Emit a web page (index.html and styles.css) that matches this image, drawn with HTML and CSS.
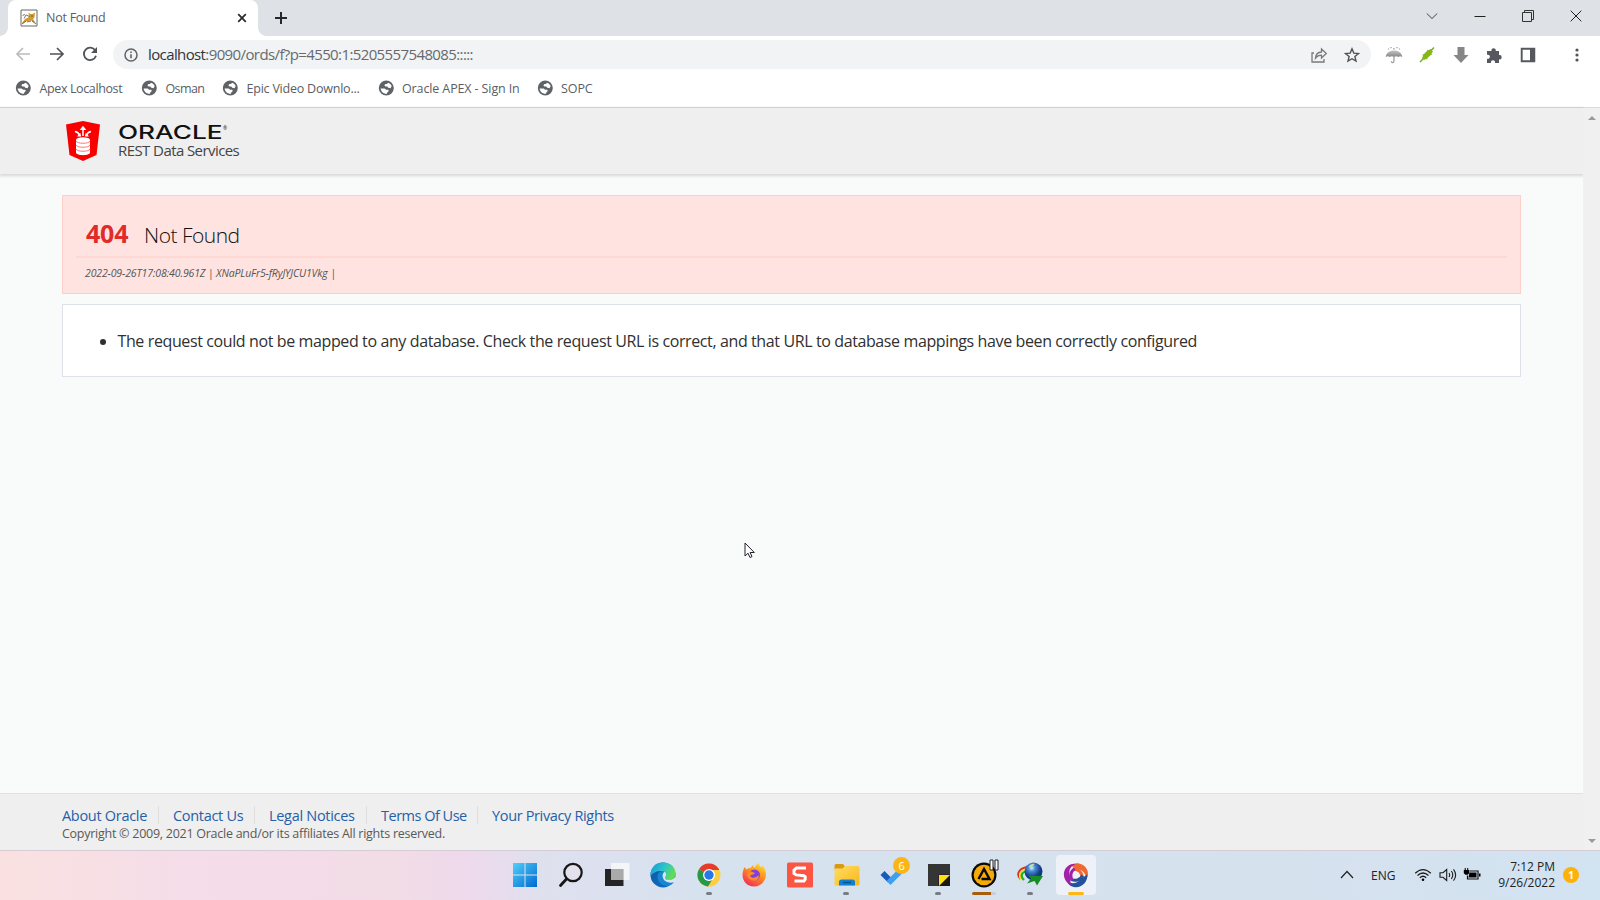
FILE: index.html
```html
<!DOCTYPE html>
<html lang="en">
<head>
<meta charset="utf-8">
<title>Not Found</title>
<link rel="stylesheet" href="styles.css">
</head>
<body>
<svg width="0" height="0" class="defs">
  <defs>
    <symbol id="globe" viewBox="0 0 16 16"><circle cx="8.300" cy="8" r="7.500" fill="#5f6368"/><path d="M10 2.800c1.800.5 3 1.600 3.700 3.300L12.500 8.300l-2.300-.5L9.300 6.500H7.500L6.300 5.300 7.500 4H9z" fill="#fff"/><path d="M2.600 8.500h4l1.600 1.200h2l.6 1.300-1.400 1.200-.4 1.500c-3.400.3-6-1.900-6.400-5.200z" fill="#fff"/></symbol>
    <linearGradient id="win" x2="1" y2="1"><stop stop-color="#4fd0fb"/><stop offset="1" stop-color="#0069cf"/></linearGradient>
    <linearGradient id="edge" x2="1" y2=".4"><stop stop-color="#1697df"/><stop offset=".6" stop-color="#2fc6c5"/><stop offset="1" stop-color="#62dc55"/></linearGradient>
    <linearGradient id="edge2" x2="1" y2="1"><stop stop-color="#0c59a4"/><stop offset="1" stop-color="#1170c8"/></linearGradient>
    <linearGradient id="fox" x1=".8" x2=".2" y2="1"><stop stop-color="#ffe32b"/><stop offset=".45" stop-color="#ff8a1d"/><stop offset="1" stop-color="#f4255e"/></linearGradient>
    <linearGradient id="folder" x2="1" y2="1"><stop stop-color="#ffdc62"/><stop offset="1" stop-color="#f9b81c"/></linearGradient>
    <linearGradient id="umb" y2="1" x2="0"><stop stop-color="#c4c4c4"/><stop offset="1" stop-color="#858585"/></linearGradient>
    <radialGradient id="ball" cx=".4" cy=".3"><stop stop-color="#d3f2ff"/><stop offset=".4" stop-color="#4989d4"/><stop offset="1" stop-color="#123b82"/></radialGradient>
  </defs>
</svg>
<div class="desktop">
  <div class="tabstrip">
    <div class="tab">
      <svg class="favicon" viewBox="0 0 18 18"><path d="M1 1h16v16H1z" fill="#fff" stroke="#666"/><path d="M2 14l3-4 4-2-.5-4.500 2 1.500h2l2.500-1.500-.5 5-1.500 1.500 3 4.500-5-3-5 1-3 2z" fill="#d49a2c"/><path d="M2 15l4-3M3 7c0-2 2.500-2 2.500 0L4 9.500M9.500 7.500L6 6M12 12l4 3M7 13l4-1M11 7h2" stroke="#56513f" stroke-width=".8" fill="none"/></svg>
      <span class="tab-title">Not Found</span>
      <svg class="tab-close" viewBox="0 0 10 10"><path d="M1.200 1.200l7.600 7.600M8.800 1.200L1.200 8.800" stroke="#25282c" stroke-width="1.700"/></svg>
    </div>
    <svg class="new-tab" viewBox="0 0 14 14"><path d="M7 1v12M1 7h12" stroke="#25282c" stroke-width="2"/></svg>
    <div class="window-controls">
      <svg viewBox="0 0 12 12"><path d="M.8 3.500L6 8.500l5.200-5" fill="none" stroke="#444"/></svg>
      <svg viewBox="0 0 12 12"><path d="M.5 6.500h11" stroke="#222"/></svg>
      <svg viewBox="0 0 12 12"><path d="M.5 2.500h9v9h-9zM2.500 2.500v-2h9v9h-2" fill="none" stroke="#333"/></svg>
      <svg viewBox="0 0 12 12"><path d="M.7 .7l10.600 10.600M11.300 .7L.7 11.300" stroke="#222"/></svg>
    </div>
  </div>

  <div class="toolbar">
    <svg class="nav" viewBox="0 0 16 16"><path d="M15 8H2M8 2L2 8l6 6" fill="none" stroke="#babcbe" stroke-width="1.700"/></svg>
    <svg class="nav" viewBox="0 0 16 16"><path d="M1 8h13M8 2l6 6-6 6" fill="none" stroke="#505357" stroke-width="1.700"/></svg>
    <svg class="nav" viewBox="0 0 16 16"><path d="M13.300 4.500A6.200 6.200 0 1 0 14 9.800" fill="none" stroke="#505357" stroke-width="1.800"/><path d="M15 1v6H9z" fill="#505357"/></svg>
    <div class="address">
      <svg class="info" viewBox="0 0 14 14"><circle cx="7" cy="7" r="6" fill="none" stroke="#5f6368" stroke-width="1.500"/><path d="M7 6.200v4M7 3.500v1.500" stroke="#5f6368" stroke-width="1.600"/></svg>
      <span class="url"><b>localhost</b>:9090/ords/f?p=4550:1:5205557548085:::::</span>
      <svg class="share" viewBox="0 0 16 16"><path d="M3 6H1v9h12v-3" fill="none" stroke="#777a7e" stroke-width="1.300"/><path d="M4.500 11c.3-4 2.500-5.800 6-6V2l4.800 4.500-4.800 4.500V8.200c-2.700 0-4.500.8-6 2.800z" fill="none" stroke="#777a7e" stroke-width="1.300"/></svg>
      <svg class="star" viewBox="0 0 16 16"><path d="M8 1.800l1.800 4.300 4.700.4-3.600 3 1.100 4.600L8 11.700l-4 2.400 1.100-4.600-3.600-3 4.700-.4z" fill="none" stroke="#505357" stroke-width="1.400"/></svg>
    </div>
    <div class="extensions">
      <svg viewBox="0 0 18 18"><path d="M.8 11C1 7 4.500 4.500 9 4.500s8 2.500 8.200 6.500c-1.500-1-2.500-1-4 0-1.500-1-2.700-1-4.200 0-1.500-1-2.700-1-4.200 0-1.500-1-2.500-1-4 0z" fill="url(#umb)"/><path d="M9 10v5c0 2-2.700 2-2.700.3M6 1v1.300M12 1v1.300M9 2v1.500M3.500 2.500v1M14.500 2.500v1" fill="none" stroke="#999" stroke-width="1.200"/></svg>
      <svg viewBox="0 0 18 18"><path d="M2 16l4-4M12 5.500l4-4" stroke="#79a82c" stroke-width="1.500"/><path d="M4.500 8.500l1.200-.2L9 5l.5-1.500 1 .8L12.500 3 15 5.500l-1.500 2 .8 1-1.500.5L9.500 12l-.3 1.500-1.200-.6-2 1-2-2 1-2z" fill="#83b818"/></svg>
      <svg viewBox="0 0 18 18"><path d="M5.500 1h7v8h4L9 17 1.500 9h4z" fill="#868686"/></svg>
      <svg viewBox="0 0 18 18"><path d="M2 5h4.500a2.200 2.200 0 1 1 4.200 0H14v4a2.200 2.200 0 1 1 0 4.300V17H10a2.100 2.100 0 1 0-4 0H2v-4.300a2.100 2.100 0 1 0 0-3.900z" fill="#55595e"/></svg>
      <svg viewBox="0 0 18 18"><path d="M2.700 2.700h12.600v12.600H2.700z" fill="none" stroke="#55595e" stroke-width="1.900"/><path d="M11 2h5v14h-5z" fill="#55595e"/></svg>
    </div>
    <svg class="menu" viewBox="0 0 4 16"><g fill="#505357"><circle cx="2" cy="3" r="1.600"/><circle cx="2" cy="8" r="1.600"/><circle cx="2" cy="13" r="1.600"/></g></svg>
  </div>

  <div class="bookmarks">
    <div class="bm bm-apex"><svg><use href="#globe"/></svg><span>Apex Localhost</span></div>
    <div class="bm bm-osman"><svg><use href="#globe"/></svg><span>Osman</span></div>
    <div class="bm bm-epic"><svg><use href="#globe"/></svg><span>Epic Video Downlo...</span></div>
    <div class="bm bm-oracle"><svg><use href="#globe"/></svg><span>Oracle APEX - Sign In</span></div>
    <div class="bm bm-sopc"><svg><use href="#globe"/></svg><span>SOPC</span></div>
  </div>

  <div class="viewport">
    <div class="page">
      <header class="site-header">
        <svg class="shield" viewBox="0 0 34 40"><path d="M0 3.500L17 0l17 3.500-3.500 30.500L17 40 3.500 34z" fill="#f80000"/><path d="M10 19v12.500c0 3.500 14 3.500 14 0V19z" fill="#fff"/><ellipse cx="17" cy="19" rx="7" ry="2.700" fill="#fff"/><path d="M10 20c1 3 13 3 14 0M10 24c1 3 13 3 14 0M10 28c1 3 13 3 14 0" fill="none" stroke="#f66" stroke-width=".9"/><path d="M17 15V8M9 10.500c2.500.5 4 2 4.500 4M25 10.500c-2.500.5-4 2-4.500 4" fill="none" stroke="#fff" stroke-width="1.500"/><path d="M17 4.800l3.300 4.200h-6.600zM11 15.500h4.200l-1-3.800zM23 15.500h-4.200l1-3.800z" fill="#fff"/></svg>
        <div class="brand">
          <div class="wordmark"><span>ORACLE</span><sup>®</sup></div>
          <div class="product">REST Data Services</div>
        </div>
      </header>
      <main>
        <section class="error">
          <h1><strong>404</strong><span>Not Found</span></h1>
          <p>2022-09-26T17:08:40.961Z | XNaPLuFr5-fRyJYJCU1Vkg |</p>
        </section>
        <section class="details"><ul><li>The request could not be mapped to any database. Check the request URL is correct, and that URL to database mappings have been correctly configured</li></ul></section>
      </main>
      <footer>
        <nav><a class="l1">About Oracle</a><a class="l2">Contact Us</a><a class="l3">Legal Notices</a><a class="l4">Terms Of Use</a><a class="l5">Your Privacy Rights</a></nav>
        <p>Copyright © 2009, 2021 Oracle and/or its affiliates All rights reserved.</p>
      </footer>
    </div>
    <div class="scrollbar">
      <svg viewBox="0 0 8 4"><path d="M0 4l4-4 4 4z" fill="#9a9a9a"/></svg>
      <svg viewBox="0 0 8 4"><path d="M0 0h8L4 4z" fill="#9a9a9a"/></svg>
    </div>
  </div>

  <div class="taskbar">
    <div class="apps">
      <div class="app"><svg viewBox="0 0 28 28"><path d="M2 2h11.500v11.500H2zM14.500 2H26v11.500H14.500zM2 14.500h11.500V26H2zM14.500 14.500H26V26H14.500z" fill="url(#win)"/></svg></div>
      <div class="app"><svg viewBox="0 0 28 28"><circle cx="16" cy="11.500" r="8.700" fill="#e4e1ec" stroke="#161616" stroke-width="2.200"/><path d="M9.500 18l-6 6.500" stroke="#161616" stroke-width="2.800" stroke-linecap="round"/></svg></div>
      <div class="app"><svg viewBox="0 0 28 28"><path d="M2 8h18.500v17H2z" fill="#242424"/><path d="M8 2h18.500v17H8z" fill="#f8f8f8" opacity=".85"/><path d="M8 8h12.500v11H8z" fill="#aaa"/></svg></div>
      <div class="app"><svg viewBox="0 0 28 28"><circle cx="14" cy="14" r="12.500" fill="url(#edge2)"/><path d="M1.600 12C3 4.500 8 1.500 14 1.500c8 0 12.500 5 12.500 11 0 4-3 6.500-7 6.500-3.500 0-4.500-1.500-3.500-3 1.500-2 .5-6-5-6-4 0-7.500 2-9.400 5z" fill="url(#edge)"/><path d="M9 13c-2 6 3 13 11 11.500 3-.6 5-3 6-5.500-5 3.500-12 1-12-5 0-1.700.7-3 1.500-3.500-3-.5-5.500.5-6.500 2.500z" fill="#1787d3"/><path d="M15.500 10.800c2 1 2 3.500.8 5.200-.9 1.400.3 3 3.200 3 3 0 5-1 6.500-3l1.500 2-1.500 2.800c-5 2.200-11.300.3-12.300-4.800-.5-2 .2-4.200 1.800-5.200z" fill="#dbe4f1"/></svg></div>
      <div class="app"><svg viewBox="0 0 28 28"><circle cx="14" cy="14" r="11.500" fill="#ffcd40"/><path d="M14 14L4 8.200A11.500 11.500 0 0 1 24 8.200L24 9H14z" fill="#e33b2e"/><path d="M14 14L4 8.200A11.500 11.500 0 0 0 13 25.500l5.500-9z" fill="#279847"/><circle cx="14" cy="14" r="6" fill="#fff"/><circle cx="14" cy="14" r="4.700" fill="#2878eb"/></svg><i class="running"></i></div>
      <div class="app"><svg viewBox="0 0 28 28"><path d="M4.500 6l2 2.500C8 7.500 9 7 10.500 7L13 4l1 3 4-5c1.500 2 2 3 2 4l3-1c3 4 4 9 2 13-2 5-6 7.500-11 7.500C7 25.500 2.500 20 2.500 14c0-3 1-6 2-8z" fill="url(#fox)"/><circle cx="14.500" cy="14" r="5.500" fill="#8141db"/><path d="M7 11c3-2 6 0 8 1-1 2-3 1-5 3 2 3 6 2 9-1 0 5-4 7-8 5-3-1.500-4.500-4.500-4-8z" fill="#ff8a27"/></svg></div>
      <div class="app"><svg viewBox="0 0 28 28"><rect x="1" y="1.500" width="26" height="25" rx="1.500" fill="#fd5544"/><path d="M20 7h-9.500L8 9.200v3.200l2.200 1.500 7.600.8 1.400 1v2.500L18 20H8.500" fill="none" stroke="#fff" stroke-width="3"/></svg></div>
      <div class="app"><svg viewBox="0 0 28 28"><path d="M2.500 4.500q0-1.500 1.500-1.500h7l2 2.500L10 9H2.500z" fill="#d89a13"/><path d="M2.500 7.500h8L13 5h13q1.500 0 1.500 1.500V23q0 1.500-1.500 1.500H4q-1.500 0-1.500-1.500z" fill="url(#folder)"/><path d="M7 24.500V21q0-2.500 2.500-2.500h11Q23 18.500 23 21v3.500z" fill="#1280d0"/><path d="M11 21.500h8" stroke="#07558f" stroke-width="1.500"/></svg><i class="running"></i></div>
      <div class="app"><svg viewBox="0 0 28 28"><path d="M2.500 14l4-4 7.500 7.500-4 4z" fill="#195abd"/><path d="M12.500 24L8.500 20 21.500 7l4 4z" fill="#3fa0ed"/></svg><b class="badge">6</b></div>
      <div class="app"><svg viewBox="0 0 28 28"><path d="M4 3h22v22H4z" fill="#353535"/><path d="M14.500 13.500H26V25H14.500z" fill="#181818"/><path d="M15 14h11L15 25z" fill="#ffde13"/></svg><i class="running"></i></div>
      <div class="app"><svg viewBox="0 0 28 28"><circle cx="14" cy="14" r="12.500" fill="#0a0a0a"/><circle cx="14" cy="14" r="10.300" fill="#f5aa08"/><path d="M8.500 18L14 8l5.500 10h-8" fill="none" stroke="#0a0a0a" stroke-width="2.400"/></svg><svg class="pause" viewBox="0 0 10 12"><path d="M1 1h3v10H1zM6 1h3v10H6z" fill="#fff" stroke="#222"/></svg><i class="running progress"></i></div>
      <div class="app"><svg viewBox="0 0 28 28"><path d="M4.500 18C-1 13 4 6 13 6" fill="none" stroke="#df3024" stroke-width="1.800"/><path d="M5.500 19C1.500 14 6 8 14 8" fill="none" stroke="#ffe21b" stroke-width="2"/><path d="M8 19c-4-4-3-8 4-9" fill="none" stroke="#22ae38" stroke-width="2.200"/><circle cx="17.500" cy="10.500" r="9" fill="url(#ball)"/><path d="M13 5c2-2 4.500-2.500 5.500-2l-2 2.500-3 1z" fill="#c8dfa0"/><path d="M12 14.500l15 .5-6 9.500-2.500-4.500-7.500 2.500 4-5z" fill="#168c24"/></svg><i class="running"></i></div>
      <div class="app active"><svg viewBox="0 0 28 28"><g transform="translate(14 14)" fill="none"><g id="blade"><path d="M-6-9.500C-1-13.500 8-12 11-5.500c1.800 4 1 8-1.500 10.500C10.500 0 8-4.500 2.500-5.500-.5-6-2.500-8.500-6-9.500z" fill="#ef6930"/></g><path d="M-6-9.500C-1-13.500 8-12 11-5.500c1.800 4 1 8-1.500 10.500C10.500 0 8-4.500 2.500-5.500-.5-6-2.500-8.500-6-9.500z" transform="rotate(120)" fill="#23519c"/><path d="M-6-9.500C-1-13.500 8-12 11-5.500c1.800 4 1 8-1.500 10.500C10.500 0 8-4.500 2.500-5.500-.5-6-2.500-8.500-6-9.500z" transform="rotate(240)" fill="#a320a8"/><path d="M-3-6C2-6 6-3 6 2" stroke="#ef6930" stroke-width="3"/><path d="M-3-6C2-6 6-3 6 2" transform="rotate(120)" stroke="#23519c" stroke-width="3"/><path d="M-3-6C2-6 6-3 6 2" transform="rotate(240)" stroke="#a320a8" stroke-width="3"/></g></svg><i class="running current"></i></div>
    </div>
    <div class="tray">
      <svg class="chevron" viewBox="0 0 14 14"><path d="M1 10l6-6.500 6 6.500" fill="none" stroke="#222" stroke-width="1.200"/></svg>
      <span class="lang">ENG</span>
      <svg class="wifi" viewBox="0 0 18 14"><g fill="none" stroke="#1b1b1b" stroke-width="1.200"><path d="M1.200 5.200q7.800-7.200 15.600 0M3.500 7.500q5.500-5 11 0M5.800 9.700q3.200-2.900 6.400 0"/></g><circle cx="9" cy="11.800" r="1.300"/></svg>
      <svg class="sound" viewBox="0 0 18 14"><g fill="none" stroke="#1b1b1b" stroke-width="1.100"><path d="M1 4.700h3L7.700 1.500v11L4 9.300H1zM10 5q1.400 2 0 4M12.300 3q3 4 0 8M14.500 1.300q4.300 5.700 0 11.400"/></g></svg>
      <svg class="battery" viewBox="0 0 18 14"><path d="M6.500 3h8.500v8H4.500V7.500" fill="none" stroke="#111" stroke-width="1.200"/><path d="M6.500 4.500h7v5h-8zM16 5.500h1.500v3H16zM.8 2h5.400v3.200L4.700 6.700H2.400L.8 5.200zM1.700 0h1v2h-1zM4.200 0h1v2h-1z"/></svg>
      <div class="clock"><span class="time">7:12 PM</span><span class="date">9/26/2022</span></div>
      <b class="notify">1</b>
    </div>
  </div>
  <svg class="cursor" viewBox="0 0 12 18"><path d="M1 1v13l3-2.800 2 4.300 2-.9-1.900-4.100h4.200z" fill="#fff" stroke="#25202a"/></svg>
</div>
</body>
</html>
```

FILE: styles.css
```css
* { box-sizing: border-box; }
body { margin: 0; font-family: "Open Sans", "Noto Sans", sans-serif; color: #222; }
svg { display: block; flex: none; }
.defs { position: absolute; }
.desktop { width: 1600px; height: 900px; display: flex; flex-direction: column; overflow: hidden; position: relative; white-space: nowrap; background: #fff; }

.tabstrip { height: 36px; flex: none; display: flex; align-items: center; background: #dee1e6; padding-left: 8px; }
.tab { position: relative; width: 250px; height: 36px; display: flex; align-items: center; background: #fff; border-radius: 8px 8px 0 0; padding: 0 11px 1px 12px; }
.tab::before, .tab::after { content: ""; position: absolute; bottom: 0; width: 8px; height: 8px; }
.tab::before { left: -8px; background: radial-gradient(circle at 0 0, #dee1e6 7.5px, #fff 8px); }
.tab::after { right: -8px; background: radial-gradient(circle at 100% 0, #dee1e6 7.5px, #fff 8px); }
.favicon { width: 18px; height: 18px; }
.tab-title { margin-left: 8px; flex: 1; font-size: 12.5px; letter-spacing: -.25px; color: #5a5e64; }
.tab-close { width: 10px; height: 10px; }
.new-tab { width: 14px; height: 14px; margin-left: 16px; }
.window-controls { margin-left: auto; display: flex; gap: 36px; padding: 0 18px 5px 0; }
.window-controls svg { width: 12px; height: 12px; }

.toolbar { height: 36px; flex: none; display: flex; align-items: center; padding: 1px 21px 0 15px; }
.nav { width: 16px; height: 16px; margin: -1px 17.500px 0 0; }
.address { width: 1258px; height: 29px; margin-left: -2.500px; border-radius: 15px; background: #f1f3f4; display: flex; align-items: center; padding: 0 11px; }
.info { width: 14px; height: 14px; }
.url { margin: -2px 0 0 10px; font-size: 15px; letter-spacing: -.61px; color: #666a6f; flex: 1; }
.url b { font-weight: 400; color: #303338; }
.share { width: 16px; height: 16px; margin-right: 17px; }
.star { width: 16px; height: 16px; }
.extensions { display: flex; gap: 15.500px; margin-left: 13.500px; }
.extensions svg { width: 18px; height: 18px; }
.menu { width: 4px; height: 16px; margin-left: auto; }

.bookmarks { height: 36px; flex: none; display: flex; align-items: center; padding: 0 0 3px 15px; border-bottom: 1px solid #dcdcdc; }
.bm { display: flex; align-items: center; gap: 8.500px; font-size: 12.500px; letter-spacing: -.22px; color: #5a5e64; }
.bm svg { width: 16px; height: 16px; }
.bm-apex { width: 126px; letter-spacing: -.38px; }
.bm-osman { width: 81px; letter-spacing: -.6px; }
.bm-epic { width: 156px; }
.bm-oracle { width: 159px; letter-spacing: -.12px; gap: 8px; }
.bm-sopc { letter-spacing: -.1px; gap: 8px; }

.viewport { height: 742px; flex: none; display: flex; }
.page { width: 1583px; display: flex; flex-direction: column; background: #f9fbfa; }
.site-header { height: 66px; flex: none; display: flex; padding: 13px 0 0 66px; background: #efefef; box-shadow: 0 1px 3px 1px rgba(0, 0, 0, .14); }
.shield { width: 34px; height: 40px; }
.brand { margin-left: 18px; padding-top: 4px; }
.wordmark { height: 16px; line-height: 16px; display: flex; color: #111; }
.wordmark span { width: 105px; height: 16px; overflow: hidden; font: 500 19px/16px Inter, sans-serif; }
.wordmark span { width: 76.500px; margin-right: 28.500px; transform: scaleX(1.380); transform-origin: 0 50%; }
.wordmark sup { font-size: 5px; line-height: 6px; }
.product { padding-top: 1px; font-size: 15px; line-height: 16px; letter-spacing: -.58px; color: #444; }
main { flex: 1; padding: 21px 62px 0; }
.error { height: 99px; padding: 24px 13px 0; border: 1px solid #fccfcb; background: #ffe3e0; }
.error h1 { margin: 0; height: 38px; padding-left: 10px; display: flex; align-items: baseline; font-weight: 400; line-height: 27px; border-bottom: 2px solid #ffd7d3; }
.error strong { width: 58px; font-size: 25px; letter-spacing: -.2px; color: #e12b28; }
.error h1 span { font-size: 21px; font-weight: 300; letter-spacing: -.5px; color: #111; }
.error p { margin: 6px 0 0 9px; font-size: 10.500px; line-height: 18px; letter-spacing: -.14px; font-style: italic; color: #555; }
.details { height: 73px; margin-top: 10px; border: 1px solid #dce2e8; background: #fff; }
.details ul { margin: 0; padding: 24px 0 0 54.500px; font-size: 16px; line-height: 24px; letter-spacing: -.385px; color: #303030; }
footer { height: 57px; padding: 12px 0 0 62px; border-top: 1px solid #dfe2e2; background: #efefef; }
nav { display: flex; height: 18px; font-size: 14.500px; line-height: 20px; letter-spacing: -.3px; color: #2460a8; }
nav a + a { padding-left: 14px; border-left: 1px solid #ddd; }
.l1 { width: 96px; } .l2 { width: 96px; } .l3 { width: 112px; } .l4 { width: 111px; letter-spacing: -.5px; } .l5 { letter-spacing: -.35px; }
footer p { margin: 0; font-size: 12.500px; line-height: 20px; letter-spacing: -.26px; color: #595959; }
.scrollbar { width: 17px; background: #f0f0f0; display: flex; flex-direction: column; justify-content: space-between; align-items: center; padding: 8px 0 7px; }
.scrollbar svg { width: 8px; height: 4px; }

.taskbar { height: 50px; display: flex; border-top: 1px solid #d5ccd6; background: linear-gradient(90deg, #fae1e0 0, #f5dde9 180px, #f2dce6 400px, #eed9ec 465px, #dfe0ee 540px, #d7e2ef 700px, #d6e1ee 1300px, #d2e3f1 1600px); }
.apps { display: flex; margin-left: 502px; }
.app { position: relative; width: 45.900px; height: 49px; padding: 10px 9px; }
.app > svg { width: 28px; height: 28px; }
.active::before { content: ""; position: absolute; left: 3px; top: 4px; width: 40px; height: 40px; border-radius: 4px; background: #eef2f8; }
.active > svg { position: relative; }
.running { position: absolute; left: 20px; top: 41px; width: 6px; height: 3px; border-radius: 2px; background: #777d84; }
.current { left: 15px; width: 16px; background: #fdb813; }
.progress { left: 11px; width: 24px; background: linear-gradient(90deg, #a95c0c 19px, #c8ced6 19px); }
.badge { position: absolute; left: 24px; top: 6px; width: 17px; height: 17px; border-radius: 50%; background: #fdb515; color: #fff; font-size: 11px; line-height: 17px; font-weight: 400; text-align: center; }
.app > .pause { position: absolute; left: 28px; top: 8px; width: 10px; height: 12px; }
.tray { margin-left: auto; display: flex; align-items: center; padding: 0 21px 1px 0; }
.chevron { width: 14px; height: 14px; margin-right: 17px; }
.lang { width: 43px; font-size: 12px; }
.wifi, .sound, .battery { width: 18px; height: 14px; margin-right: 7px; }
.battery { margin-left: -1px; margin-right: 8px; }
.clock { width: 66px; display: flex; flex-direction: column; text-align: right; font-size: 12px; line-height: 16.500px; }
.notify { margin-left: 8px; width: 16px; height: 16px; border-radius: 50%; background: #fdb10b; color: #fff; font-size: 10px; line-height: 16px; text-align: center; }
.cursor { position: absolute; left: 743.500px; top: 542px; width: 12px; height: 18px; }
```
